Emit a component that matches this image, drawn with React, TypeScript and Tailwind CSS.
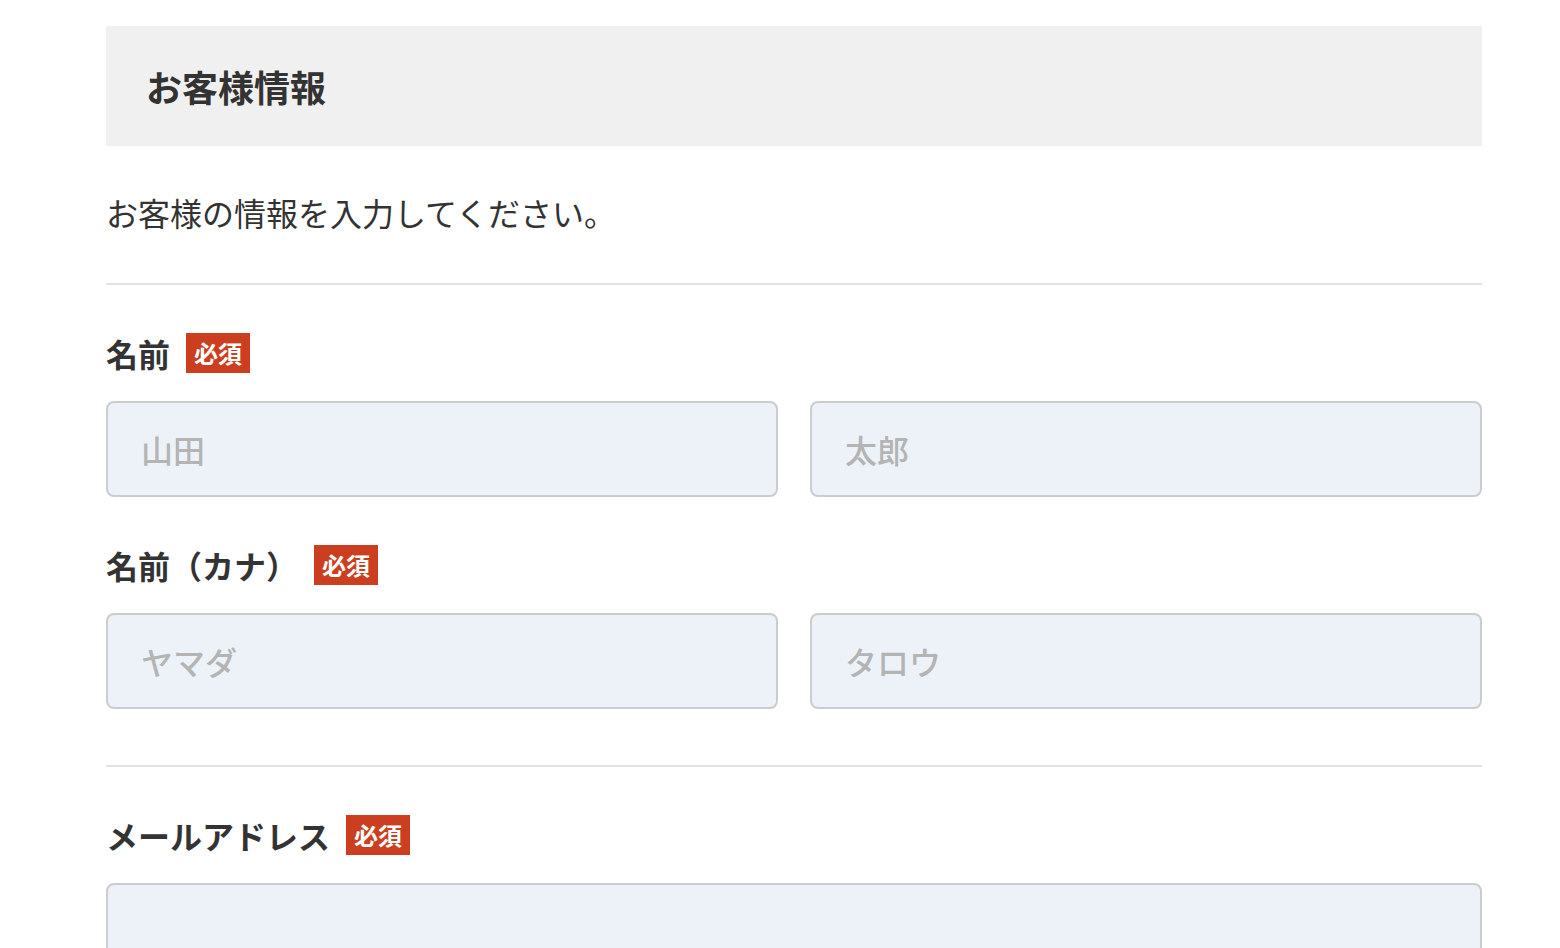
const font = { fontFamily: '"Noto Sans CJK JP", "Noto Sans", sans-serif' };

const Badge = () => (
  <span className="inline-flex h-[40px] items-center bg-[#cb3f20] px-[8px] text-[24px] font-bold leading-none text-white">
    必須
  </span>
);

const Label = ({ text }: { text: string }) => (
  <div className="flex items-center gap-[16px]">
    <span className="text-[32px] font-bold leading-none text-[#333333]">{text}</span>
    <Badge />
  </div>
);

const Input = ({ placeholder }: { placeholder?: string }) => (
  <input
    type="text"
    placeholder={placeholder}
    className="h-[96px] w-full rounded-[8px] border-2 border-[#cccccc] bg-[#edf2f9] px-[33px] text-[32px] font-medium text-[#333333] outline-none placeholder:text-[#b4b4b4]"
  />
);

export default function App() {
  return (
    <div className="min-h-screen bg-white" style={font}>
      <div className="ml-[106px] mr-[78px] pt-[26px]">
        <div className="flex h-[120px] items-center bg-[#f0f0f0] px-[40px]">
          <h2 className="text-[36px] font-bold text-[#333333]">お客様情報</h2>
        </div>

        <p className="mt-[41px] text-[32px] leading-[51px] text-[#333333]">お客様の情報を入力してください。</p>

        <div className="mt-[45px] h-[2px] bg-[#e2e2e2]" />

        <div className="mt-[48px]">
          <Label text="名前" />
          <div className="mt-[28px] grid grid-cols-2 gap-[32px]">
            <Input placeholder="山田" />
            <Input placeholder="太郎" />
          </div>
        </div>

        <div className="mt-[48px]">
          <Label text="名前（カナ）" />
          <div className="mt-[28px] grid grid-cols-2 gap-[32px]">
            <Input placeholder="ヤマダ" />
            <Input placeholder="タロウ" />
          </div>
        </div>

        <div className="mt-[56px] h-[2px] bg-[#e2e2e2]" />

        <div className="mt-[48px]">
          <Label text="メールアドレス" />
          <div className="mt-[28px]">
            <Input />
          </div>
        </div>
      </div>
    </div>
  );
}
